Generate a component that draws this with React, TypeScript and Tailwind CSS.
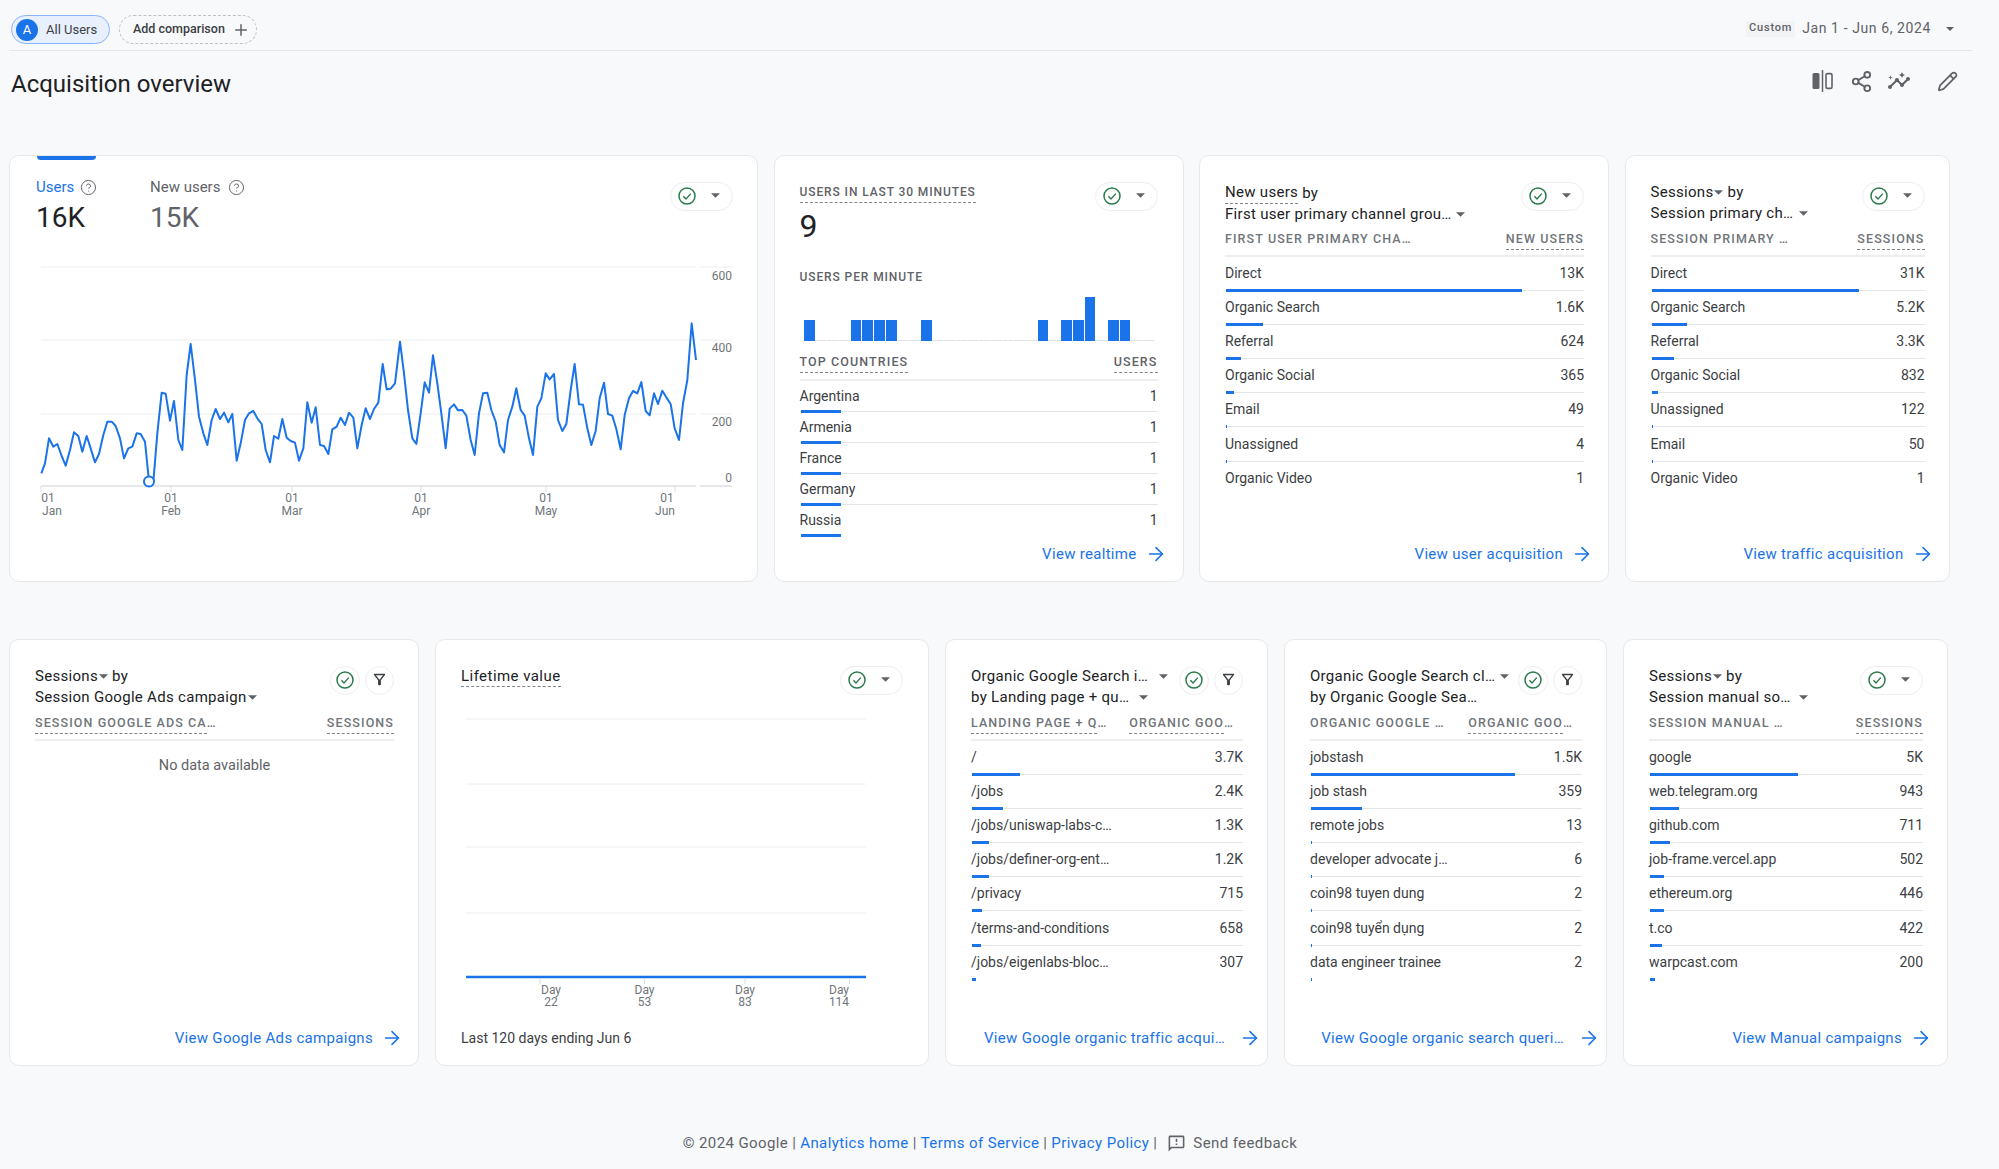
import React from 'react';
import { ArrowRight, CircleHelp, Pencil, Plus, Share2 } from 'lucide-react';

const trendLeft = [[64,670],[75,640],[87,565],[100,590],[112,582],[125,618],[137,647],[150,600],[162,547],[175,558],[187,605],[200,558],[212,595],[225,637],[237,612],[250,555],[262,515],[275,515],[287,528],[300,565],[312,625],[325,595],[337,590],[350,550],[362,552],[375,575],[387,695],[400,695],[412,550],[425,428],[437,431],[450,512],[462,453],[475,570],[487,600],[500,375],[512,282],[525,390],[537,500],[550,550],[562,585],[575,510],[587,477],[600,507],[612,488],[625,517],[637,492],[650,632],[662,580],[675,510],[687,490],[700,483],[712,505],[725,522],[737,600],[750,637],[762,558],[775,566],[787,507],[800,563],[812,573],[825,578],[837,632],[850,595],[862,457],[875,518],[887,472],[900,585],[912,588],[925,612],[937,538],[950,530],[962,503],[975,525],[987,488],[1000,503],[1012,595],[1025,525],[1037,475],[1050,507],[1062,477],[1075,458],[1088,342],[1100,418],[1112,416],[1125,400]];
const trendRight = [[0,275],[12,370],[24,480],[37,565],[49,582],[62,490],[74,397],[87,428],[99,316],[112,400],[124,490],[137,595],[149,476],[162,463],[174,481],[187,480],[199,497],[212,570],[224,615],[237,490],[249,430],[262,428],[274,480],[287,515],[299,585],[312,607],[324,510],[337,470],[349,415],[362,480],[374,497],[387,565],[399,615],[412,470],[424,445],[437,370],[449,388],[462,372],[474,510],[487,543],[499,522],[512,420],[524,342],[537,463],[549,464],[562,535],[574,585],[587,543],[599,445],[612,398],[624,492],[637,497],[649,537],[662,598],[674,495],[687,445],[699,423],[712,430],[724,396],[737,483],[749,496],[762,430],[774,462],[787,422],[799,442],[812,462],[824,535],[837,570],[849,460],[862,390],[875,220],[888,330]];

const trendPoints = [
  ...trendLeft.map(([x, y]) => `${20 + x / 3},${250 + y / 3}`),
  ...trendRight.map(([x, y]) => `${400 + x / 3},${250 + y / 3}`),
].join(' ');

const monthTicks = [
  { x: 41, day: 48, label: 'Jan', labelX: 52 },
  { x: 171, day: 171, label: 'Feb', labelX: 171 },
  { x: 292, day: 292, label: 'Mar', labelX: 292 },
  { x: 421, day: 421, label: 'Apr', labelX: 421 },
  { x: 546, day: 546, label: 'May', labelX: 546 },
  { x: 675, day: 667, label: 'Jun', labelX: 665 },
];

const perMinute = [21,0,0,0,21,21,21,21,0,0,21,0,0,0,0,0,0,0,0,0,21,0,21,21,44,0,21,21,0,0];

const countries = ['Argentina', 'Armenia', 'France', 'Germany', 'Russia'];

const Caret = ({ className = 'w-[9px] h-[5px] fill-[#5f6368]' }: { className?: string }) => (
  <svg viewBox="0 0 10 5" className={className}>
    <path d="M0 0h10L5 5z" />
  </svg>
);

const CheckIcon = () => (
  <svg viewBox="0 0 18 18" className="w-[18px] h-[18px] fill-none stroke-[#2b7a4b]">
    <circle cx="9" cy="9" r="8" strokeWidth="1.5" />
    <path d="M5.4 9.3l2.6 2.7 4.8-5.4" strokeWidth="1.4" />
  </svg>
);

const CheckPill = () => (
  <div className="flex items-center gap-[15px] w-[63px] h-[29px] pl-[7px] pb-[2px] rounded-full border border-[#eceef0] bg-white">
    <CheckIcon />
    <Caret />
  </div>
);

const FilterPills = () => (
  <div className="flex gap-[5px]">
    <div className="flex items-center justify-center w-[30px] h-[29px] pb-[2px] rounded-full border border-[#eceef0]">
      <CheckIcon />
    </div>
    <div className="flex items-center justify-center w-[29px] h-[29px] pb-[2px] rounded-full border border-[#eceef0]">
      <svg viewBox="0 0 24 24" className="w-[17px] h-[17px] fill-[#3c4043]">
        <path d="M7 6h10l-5.01 6.3L7 6zm-2.75-.39C6.27 8.2 10 13 10 13v6c0 .55.45 1 1 1h2c.55 0 1-.45 1-1v-6s3.73-4.8 5.75-7.39C20.26 4.95 19.79 4 18.95 4H5.04c-.83 0-1.3.95-.79 1.61z" />
      </svg>
    </div>
  </div>
);

const Dashed = ({ children }: { children: React.ReactNode }) => (
  <span className="inline-block border-b border-dashed border-[#80868b]">{children}</span>
);

const ViewLink = ({ label, className = '-mr-[9px]', wide }: { label: string; className?: string; wide?: boolean }) => (
  <div className={`mt-auto mb-[17px] flex items-center justify-end h-[20px] text-[15px] tracking-[0.3px] text-[#1a73e8] ${wide ? 'gap-[14px]' : 'gap-[8px]'} ${className}`}>
    <span>{label}</span>
    <ArrowRight size={22} strokeWidth={1.7} />
  </div>
);

type Row = { name: string; value: string; bar: number };

type TableCardProps = {
  width: string;
  line1: React.ReactNode;
  line2: React.ReactNode;
  pills?: React.ReactNode;
  col1: React.ReactNode;
  col2: React.ReactNode;
  rows: Row[];
  emptyText?: string;
  link: string;
  linkClass?: string;
  wideLink?: boolean;
};

const TableCard = ({ width, line1, line2, pills, col1, col2, rows, emptyText, link, linkClass, wideLink }: TableCardProps) => (
  <section className={`${width} h-[427px] flex flex-col pt-[26px] pl-[25px] pr-[24px] bg-white border border-[#e6e8eb] rounded-[10px]`}>
    <div className="flex justify-between h-[47px]">
      <div className="text-[15px] leading-[21px] tracking-[0.3px] text-[#202124] whitespace-nowrap">
        <div className="flex items-center">{line1}</div>
        <div className="flex items-center">{line2}</div>
      </div>
      {pills ?? <CheckPill />}
    </div>
    <div className="flex justify-between h-[28px] border-b-2 border-[#eceef0] text-[12.5px] leading-[20px] font-medium tracking-[1.1px] text-[#70757a] whitespace-nowrap">
      <div>{col1}</div>
      <div>{col2}</div>
    </div>
    {emptyText && <div className="mt-[15px] text-center text-[14.5px] leading-[20px] text-[#5f6368]">{emptyText}</div>}
    {rows.map((row, i) => (
      <div key={row.name} className="h-[34.1px]">
        <div className="flex justify-between h-[33.1px] items-center text-[14px] text-[#3c4043]">
          <span>{row.name}</span>
          <span>{row.value}</span>
        </div>
        <div className={`relative h-[1px] ${i < rows.length - 1 ? 'bg-[#e3e5e8]' : ''}`}>
          <div className="absolute left-[1px] -top-[1px] h-[3px] bg-[#1a73e8]" style={{ width: row.bar }} />
        </div>
      </div>
    ))}
    <ViewLink label={link} className={linkClass} wide={wideLink} />
  </section>
);

const toRows = (names: string[], values: string[], bars: number[]): Row[] =>
  names.map((name, i) => ({ name, value: values[i], bar: bars[i] }));

const UsersCard = () => (
  <section className="relative w-[749px] h-[427px] pl-[26px] pr-[24px] bg-white border border-[#e6e8eb] rounded-[10px]">
    <div className="absolute left-[27px] top-0 w-[59px] h-[4px] rounded-b-[4px] bg-[#1a73e8]" />
    <div className="flex justify-between h-[106px] pt-[21px]">
      <div className="flex gap-[49px]">
        <div className="w-[65px]">
          <div className="flex items-center gap-[6px] h-[20px] text-[15px] text-[#1a73e8]">
            Users <CircleHelp size={17} strokeWidth={1.4} className="text-[#5f6368]" />
          </div>
          <div className="mt-[4px] text-[28px] leading-[34px] text-[#202124]">16K</div>
        </div>
        <div>
          <div className="flex items-center gap-[8px] h-[20px] text-[15px] text-[#5f6368]">
            New users <CircleHelp size={17} strokeWidth={1.4} />
          </div>
          <div className="mt-[4px] text-[28px] leading-[34px] text-[#5f6368]">15K</div>
        </div>
      </div>
      <div className="pt-[5px]"><CheckPill /></div>
    </div>
    <svg viewBox="37 262 700 262" className="block ml-[1px] w-[700px] h-[262px] text-[12px]">
      {[267, 340, 414].map((y) => (
        <g key={y} className="stroke-[#eceef0]">
          <line x1="41" x2="696" y1={y} y2={y} />
          <line x1="700" x2="732" y1={y} y2={y} />
        </g>
      ))}
      <g className="stroke-[#dfe1e5]" strokeWidth="1.5">
        <line x1="41" x2="696" y1="486" y2="486" />
        <line x1="700" x2="732" y1="486" y2="486" />
      </g>
      {monthTicks.map((t) => (
        <g key={t.label}>
          <line x1={t.x} x2={t.x} y1="486" y2="492" className="stroke-[#dadce0]" />
          <text x={t.day} y="502" textAnchor="middle" className="fill-[#70757a]">01</text>
          <text x={t.labelX} y="515" textAnchor="middle" className="fill-[#70757a]">{t.label}</text>
        </g>
      ))}
      {[['600', 280], ['400', 352], ['200', 426], ['0', 482]].map(([label, y]) => (
        <text key={label} x="732" y={y} textAnchor="end" className="fill-[#70757a]">{label}</text>
      ))}
      <polyline points={trendPoints} className="fill-none stroke-[#1a73e8]" strokeWidth="2" strokeLinejoin="round" />
      <circle cx="149" cy="481.5" r="5" className="fill-white stroke-[#1a73e8]" strokeWidth="2" />
    </svg>
  </section>
);

const RealtimeCard = () => (
  <section className="w-[410px] h-[427px] flex flex-col pt-[26px] pl-[25px] pr-[25px] bg-white border border-[#e6e8eb] rounded-[10px]">
    <div className="flex justify-between h-[64px]">
      <div>
        <div className="h-[20px] text-[12px] leading-[20px] font-medium tracking-[0.9px] text-[#5f6368]">
          <Dashed>USERS IN LAST 30 MINUTES</Dashed>
        </div>
        <div className="mt-[4px] text-[32px] leading-[40px] text-[#202124]">9</div>
      </div>
      <CheckPill />
    </div>
    <div className="mt-[21px] h-[20px] text-[12px] leading-[20px] font-medium tracking-[0.9px] text-[#5f6368]">USERS PER MINUTE</div>
    <div className="flex items-end ml-[4px] mt-[10px] h-[44px] w-[351px]">
      {perMinute.map((h, i) =>
        h ? (
          <div key={i} className="w-[11.7px] px-[0.5px]">
            <div className="bg-[#1a73e8]" style={{ height: h }} />
          </div>
        ) : (
          <div key={i} className="w-[11.7px] px-[0.5px]">
            <div className="h-[1px] bg-[#dfe1e5]" />
          </div>
        ),
      )}
    </div>
    <div className="flex justify-between mt-[11px] h-[29px] border-b-2 border-[#eceef0] text-[12.5px] leading-[20px] font-medium tracking-[1.1px] text-[#5f6368]">
      <div><Dashed>TOP COUNTRIES</Dashed></div>
      <div><Dashed>USERS</Dashed></div>
    </div>
    {countries.map((name, i) => (
      <div key={name} className="h-[31px]">
        <div className="flex justify-between items-center h-[30px] text-[14px] text-[#3c4043]">
          <span>{name}</span>
          <span>1</span>
        </div>
        <div className={`relative h-[1px] ${i < countries.length - 1 ? 'bg-[#e3e5e8]' : ''}`}>
          <div className="absolute left-[1px] -top-[1px] w-[40px] h-[3px] bg-[#1a73e8]" />
        </div>
      </div>
    ))}
    <ViewLink label="View realtime" />
  </section>
);

const LifetimeCard = () => (
  <section className="w-[494px] h-[427px] flex flex-col pt-[26px] pl-[25px] pr-[25px] bg-white border border-[#e6e8eb] rounded-[10px]">
    <div className="flex justify-between h-[29px]">
      <div className="text-[15px] leading-[20px] tracking-[0.45px] text-[#202124]"><Dashed>Lifetime value</Dashed></div>
      <CheckPill />
    </div>
    <svg viewBox="461 695 419 315" className="block mt-0 w-[419px] h-[315px] text-[12px]">
      {[719, 784, 847, 913].map((y) => (
        <line key={y} x1="466" x2="866" y1={y} y2={y} className="stroke-[#eceef0]" />
      ))}
      <line x1="466" x2="866" y1="977" y2="977" className="stroke-[#1a73e8]" strokeWidth="2.5" />
      {[540, 644.5, 745, 849.5].map((x) => (
        <line key={x} x1={x} x2={x} y1="978" y2="984" className="stroke-[#dadce0]" />
      ))}
      {[['22', 551], ['53', 644.5], ['83', 745], ['114', 839]].map(([day, x]) => (
        <g key={day} className="fill-[#70757a]">
          <text x={x} y="994" textAnchor="middle">Day</text>
          <text x={x} y="1006" textAnchor="middle">{day}</text>
        </g>
      ))}
    </svg>
    <div className="mt-auto mb-[17px] h-[20px] text-[14px] leading-[20px] text-[#3c4043]">Last 120 days ending Jun 6</div>
  </section>
);

const App = () => {
  return (
    <div className="min-h-screen w-[1999px] bg-[#f8f9fb] pl-[9px] font-['Roboto',sans-serif]">
      <header className="flex justify-between items-start w-[1963px] h-[51px] pt-[15px] pl-[2px] border-b border-[#e3e5e8]">
        <div className="flex gap-[9px]">
          <div className="flex items-center w-[99px] h-[29px] rounded-full border border-[#8ab4f8] bg-[#e8f0fe] pl-[4px] text-[13px] text-[#3c4043]">
            <span className="flex items-center justify-center w-[22px] h-[22px] rounded-full bg-[#1a73e8] text-[13px] text-white">A</span>
            <span className="ml-[8px]">All Users</span>
          </div>
          <div className="flex items-center w-[138px] h-[29px] rounded-full border border-dashed border-[#bdc1c6] pl-[13px] text-[12.5px] font-medium text-[#3c4043]">
            <span>Add comparison</span>
            <Plus size={18} strokeWidth={2} className="ml-[7px] text-[#5f6368]" />
          </div>
        </div>
        <div className="flex items-center h-[22px] pt-[5px] mr-[18px]">
          <span className="flex items-center h-[16px] px-[3px] bg-[#f1f3f4] text-[11px] font-medium tracking-[0.8px] text-[#5f6368]">Custom</span>
          <span className="ml-[7px] text-[14px] tracking-[0.6px] text-[#5f6368]">Jan 1 - Jun 6, 2024</span>
          <Caret className="ml-[15px] w-[8px] h-[4px] fill-[#5f6368]" />
        </div>
      </header>

      <div className="flex justify-between items-start w-[1949px] h-[104px] pt-[18px] pl-[2px]">
        <h1 className="text-[24px] leading-[30px] font-normal text-[#202124]">Acquisition overview</h1>
        <div className="flex items-center text-[#5f6368]">
          <svg viewBox="0 0 21 22" className="w-[21px] h-[22px]">
            <rect x="0.5" y="3" width="7" height="16" rx="1.5" className="fill-[#5f6368]" />
            <line x1="10.5" x2="10.5" y1="0" y2="22" className="stroke-[#5f6368]" strokeWidth="1.5" />
            <rect x="14" y="3.6" width="6" height="14.8" rx="1.5" className="fill-none stroke-[#5f6368]" strokeWidth="1.6" />
          </svg>
          <Share2 size={23} strokeWidth={2} className="ml-[17px]" />
          <svg viewBox="0 0 24 24" className="ml-[14px] w-[24px] h-[24px] fill-[#5f6368]">
            <path d="M21 8c-1.45 0-2.26 1.44-1.93 2.51l-3.55 3.56c-.3-.09-.74-.09-1.04 0l-2.55-2.55C12.27 10.45 11.46 9 10 9c-1.45 0-2.27 1.44-1.93 2.52l-4.56 4.55C2.44 15.74 1 16.55 1 18c0 1.1.9 2 2 2 1.45 0 2.26-1.44 1.93-2.51l4.55-4.56c.3.09.74.09 1.04 0l2.55 2.55C12.73 16.55 13.54 18 15 18c1.45 0 2.27-1.44 1.93-2.52l3.56-3.55c1.07.33 2.51-.48 2.51-1.93 0-1.1-.9-2-2-2z" />
            <path d="M15 9l.94-2.07L18 6l-2.06-.93L15 3l-.92 2.07L12 6l2.08.93z" />
            <path d="M3.5 11L4 9l2-.5L4 8l-.5-2L3 8l-2 .5L3 9z" />
          </svg>
          <Pencil size={21} strokeWidth={2} className="ml-[26px]" />
        </div>
      </div>

      <div className="flex gap-[15.5px]">
        <UsersCard />
        <RealtimeCard />
        <TableCard
          width="w-[410px]"
          line1={<><Dashed>New users</Dashed><span className="ml-[4px]">by</span></>}
          line2={<>First user primary channel grou…<Caret className="ml-[4px] w-[9px] h-[5px] fill-[#5f6368]" /></>}
          col1="FIRST USER PRIMARY CHA…"
          col2={<Dashed>NEW USERS</Dashed>}
          rows={toRows(
            ['Direct', 'Organic Search', 'Referral', 'Organic Social', 'Email', 'Unassigned', 'Organic Video'],
            ['13K', '1.6K', '624', '365', '49', '4', '1'],
            [296, 37, 15, 8, 1, 1, 0],
          )}
          link="View user acquisition"
        />
        <TableCard
          width="w-[325px]"
          line1={<>Sessions<Caret className="ml-[1px] w-[9px] h-[5px] fill-[#5f6368]" /><span className="ml-[4px]">by</span></>}
          line2={<>Session primary ch…<Caret className="ml-[6px] w-[9px] h-[5px] fill-[#5f6368]" /></>}
          col1="SESSION PRIMARY …"
          col2={<Dashed>SESSIONS</Dashed>}
          rows={toRows(
            ['Direct', 'Organic Search', 'Referral', 'Organic Social', 'Unassigned', 'Email', 'Organic Video'],
            ['31K', '5.2K', '3.3K', '832', '122', '50', '1'],
            [207, 35, 22, 6, 1, 1, 0],
          )}
          link="View traffic acquisition"
        />
      </div>

      <div className="flex gap-4 mt-[57px]">
        <TableCard
          width="w-[410px]"
          line1={<>Sessions<Caret className="ml-[1px] w-[9px] h-[5px] fill-[#5f6368]" /><span className="ml-[4px]">by</span></>}
          line2={<>Session Google Ads campaign<Caret className="ml-[1px] w-[9px] h-[5px] fill-[#5f6368]" /></>}
          pills={<FilterPills />}
          col1={<><Dashed>SESSION GOOGLE ADS CA</Dashed>…</>}
          col2={<Dashed>SESSIONS</Dashed>}
          rows={[]}
          emptyText="No data available"
          link="View Google Ads campaigns"
        />
        <LifetimeCard />
        <TableCard
          width="w-[323px]"
          line1={<>Organic Google Search i…<Caret className="ml-[11px] w-[9px] h-[5px] fill-[#5f6368]" /></>}
          line2={<>by Landing page + qu…<Caret className="ml-[10px] w-[9px] h-[5px] fill-[#5f6368]" /></>}
          pills={<FilterPills />}
          col1={<><Dashed>LANDING PAGE + Q</Dashed>…</>}
          col2={<span className="inline-block mr-[9px]"><Dashed>ORGANIC GOO</Dashed>…</span>}
          rows={toRows(
            ['/', '/jobs', '/jobs/uniswap-labs-c…', '/jobs/definer-org-ent…', '/privacy', '/terms-and-conditions', '/jobs/eigenlabs-bloc…'],
            ['3.7K', '2.4K', '1.3K', '1.2K', '715', '658', '307'],
            [48, 31, 17, 17, 10, 9, 4],
          )}
          link="View Google organic traffic acqui…"
          linkClass="-mr-[18px]"
          wideLink
        />
        <TableCard
          width="w-[323px]"
          line1={<>Organic Google Search cl…<Caret className="ml-[5px] w-[9px] h-[5px] fill-[#5f6368]" /></>}
          line2={<>by Organic Google Sea…</>}
          pills={<FilterPills />}
          col1="ORGANIC GOOGLE …"
          col2={<span className="inline-block mr-[9px]"><Dashed>ORGANIC GOO</Dashed>…</span>}
          rows={toRows(
            ['jobstash', 'job stash', 'remote jobs', 'developer advocate j…', 'coin98 tuyen dung', 'coin98 tuyển dụng', 'data engineer trainee'],
            ['1.5K', '359', '13', '6', '2', '2', '2'],
            [204, 51, 1, 1, 1, 1, 1],
          )}
          link="View Google organic search queri…"
          linkClass="-mr-[18px]"
          wideLink
        />
        <TableCard
          width="w-[325px]"
          line1={<>Sessions<Caret className="ml-[1px] w-[9px] h-[5px] fill-[#5f6368]" /><span className="ml-[4px]">by</span></>}
          line2={<>Session manual so…<Caret className="ml-[8px] w-[9px] h-[5px] fill-[#5f6368]" /></>}
          col1="SESSION MANUAL …"
          col2={<Dashed>SESSIONS</Dashed>}
          rows={toRows(
            ['google', 'web.telegram.org', 'github.com', 'job-frame.vercel.app', 'ethereum.org', 't.co', 'warpcast.com'],
            ['5K', '943', '711', '502', '446', '422', '200'],
            [148, 29, 20, 14, 14, 12, 5],
          )}
          link="View Manual campaigns"
        />
      </div>

      <footer className="flex justify-center items-center w-[1962px] mt-[67px] h-[20px] text-[15px] tracking-[0.4px] text-[#5f6368]">
        <span>© 2024 Google</span>
        <span className="mx-[4px]">|</span>
        <span className="text-[#1a73e8]">Analytics home</span>
        <span className="mx-[4px]">|</span>
        <span className="text-[#1a73e8]">Terms of Service</span>
        <span className="mx-[4px]">|</span>
        <span className="text-[#1a73e8]">Privacy Policy</span>
        <span className="mx-[4px]">|</span>
        <svg viewBox="0 0 24 24" className="ml-[6px] w-[19px] h-[19px] fill-[#5f6368]">
          <path d="M20 2H4c-1.1 0-2 .9-2 2v18l4-4h14c1.1 0 2-.9 2-2V4c0-1.1-.9-2-2-2zm0 14H5.17L4 17.17V4h16v12z" />
          <path d="M11 12h2v2h-2zm0-6h2v4h-2z" />
        </svg>
        <span className="ml-[7px]">Send feedback</span>
      </footer>
    </div>
  );
};

export default App;
